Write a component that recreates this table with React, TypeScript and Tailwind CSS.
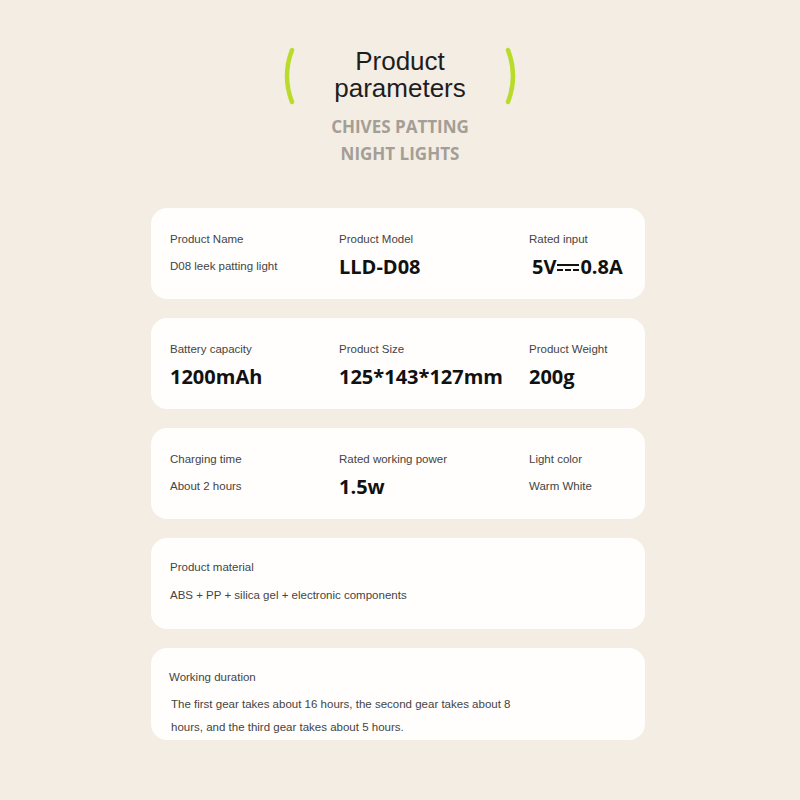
import React from 'react';

interface Param {
	label: string;
	value: string;
	big?: boolean;
}

const rows: Param[][] = [
	[
		{ label: 'Product Name', value: 'D08 leek patting light' },
		{ label: 'Product Model', value: 'LLD-D08', big: true },
		{ label: 'Rated input', value: '5V⎓0.8A', big: true },
	],
	[
		{ label: 'Battery capacity', value: '1200mAh', big: true },
		{ label: 'Product Size', value: '125*143*127mm', big: true },
		{ label: 'Product Weight', value: '200g', big: true },
	],
	[
		{ label: 'Charging time', value: 'About 2 hours' },
		{ label: 'Rated working power', value: '1.5w', big: true },
		{ label: 'Light color', value: 'Warm White' },
	],
];

function Bracket({ flip }: { flip?: boolean }) {
	return (
		<svg width="16" height="58" viewBox="0 0 16 58" className={flip ? 'scale-x-[-1]' : ''}>
			<path d="M11 3 Q1 29 11 55" fill="none" stroke="#b9dc2c" strokeWidth="4.5" strokeLinecap="round" />
		</svg>
	);
}

function Value({ p }: { p: Param }) {
	if (p.label === 'Rated input') {
		return (
			<span className="ml-[3px] flex items-center text-[20px] font-bold text-[#111] font-['Open_Sans',sans-serif]">
				5V
				<span className="mx-[1px] flex flex-col gap-[3px]">
					<span className="block w-[22px] h-[2px] bg-[#111]" />
					<span className="flex gap-[2px]">
						<span className="block w-[6px] h-[2px] bg-[#111]" />
						<span className="block w-[6px] h-[2px] bg-[#111]" />
						<span className="block w-[6px] h-[2px] bg-[#111]" />
					</span>
				</span>
				0.8A
			</span>
		);
	}
	if (p.big) {
		return <span className="text-[20px] font-bold text-[#111] font-['Open_Sans',sans-serif]">{p.value}</span>;
	}
	return <span className="text-[11.5px] text-[#444]">{p.value}</span>;
}

export default function App() {
	return (
		<div className="min-h-[800px] w-[800px] bg-[#f3ede3] font-['Liberation_Sans',Arial,sans-serif] pb-[60px]">
			<div className="pt-[45px] flex justify-center items-center">
				<div className="mr-[28px] mt-[2px]"><Bracket /></div>
				<h1 className="text-[26px] leading-[27px] text-[#1e1e1e] text-center w-[150px]">
					Product<br />parameters
				</h1>
				<div className="ml-[28px] mt-[2px]"><Bracket flip /></div>
			</div>
			<div className="mt-[8px] text-center text-[17px] leading-[27px] font-bold text-[#a39e96] font-['Open_Sans',sans-serif]">
				CHIVES PATTING<br />NIGHT LIGHTS
			</div>

			<div className="mt-[41px] ml-[151px] w-[494px] flex flex-col gap-[19px]">
				{rows.map((row, i) => (
					<div key={i} className="h-[91px] rounded-[16px] bg-[#fffefc] pl-[19px] pt-[23px] grid grid-cols-[169px_190px_1fr]">
						{row.map(p => (
							<div key={p.label} className="flex flex-col">
								<span className="h-[16px] leading-[16px] text-[11.5px] text-[#444]">{p.label}</span>
								<div className="mt-[6px] h-[28px] flex items-center">
									<Value p={p} />
								</div>
							</div>
						))}
					</div>
				))}

				<div className="h-[91px] rounded-[16px] bg-[#fffefc] pl-[19px] pt-[21px] flex flex-col">
					<span className="h-[16px] leading-[16px] text-[11.5px] text-[#444]">Product material</span>
					<span className="mt-[12px] text-[11.5px] leading-[16px] text-[#444]">ABS + PP + silica gel + electronic components</span>
				</div>

				<div className="h-[92px] rounded-[16px] bg-[#fffefc] pl-[18px] pt-[21px] flex flex-col">
					<span className="h-[16px] leading-[16px] text-[11.5px] text-[#444]">Working duration</span>
					<p className="mt-[8px] pl-[2px] w-[360px] text-[11.5px] leading-[23px] text-[#444]">
						The first gear takes about 16 hours, the second gear takes about 8 hours, and the third gear takes about 5 hours.
					</p>
				</div>
			</div>
		</div>
	);
}
